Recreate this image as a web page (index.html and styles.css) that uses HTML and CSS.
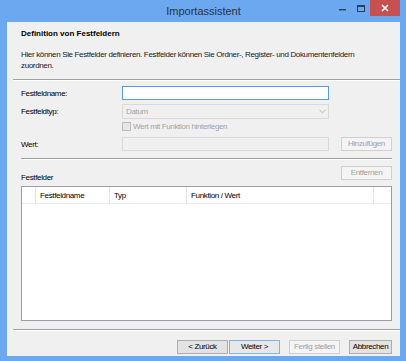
FILE: index.html
```html
<!DOCTYPE html>
<html lang="de">
<head>
    <meta charset="UTF-8">
    <title>Importassistent</title>
    <link rel="stylesheet" href="styles.css">
</head>
<body>
    <div class="window">
        <div class="titlebar">
            <span class="title">Importassistent</span>
            <div class="controls">
                <span class="ctl ctl-min"><svg width="18" height="16" viewBox="0 0 18 16"><rect x="4" y="9" width="7" height="1.4" fill="#2c3e56"/></svg></span>
                <span class="ctl ctl-max"><svg width="17" height="16" viewBox="0 0 17 16"><rect x="4.5" y="5.5" width="7" height="6" fill="none" stroke="#2c3e56" stroke-width="1"/><rect x="4" y="5" width="8" height="2" fill="#2c3e56"/></svg></span>
                <span class="ctl ctl-close"><svg width="30" height="16" viewBox="0 0 30 16"><path d="M12 5 L18 11 M18 5 L12 11" stroke="#fff" stroke-width="1.6"/></svg></span>
            </div>
        </div>

        <div class="client">
            <div class="header">
                <div class="heading">Definition von Festfeldern</div>
                <p class="intro">Hier können Sie Festfelder definieren. Festfelder können Sie Ordner-, Register- und Dokumentenfeldern zuordnen.</p>
            </div>
            <div class="rule rule-wide"></div>

            <div class="form">
                <div class="row">
                    <label class="label">Festfeldname:</label>
                    <div class="textbox focused"></div>
                </div>
                <div class="row row-select">
                    <label class="label">Festfeldtyp:</label>
                    <div class="combo disabled">
                        <span>Datum</span>
                        <svg width="7" height="5" viewBox="0 0 7 5"><path d="M0.5 0.8 L3.5 3.8 L6.5 0.8" fill="none" stroke="#b5b5b5" stroke-width="1"/></svg>
                    </div>
                </div>
                <div class="row row-check">
                    <span class="label"></span>
                    <span class="checkbox"></span>
                    <span class="check-text">Wert mit Funktion hinterlegen</span>
                </div>
                <div class="row row-value">
                    <label class="label">Wert:</label>
                    <div class="textbox disabled"></div>
                    <button class="btn btn-disabled btn-side">Hinzufügen</button>
                </div>

                <div class="rule rule-form"></div>

                <div class="list-bar">
                    <span class="list-title">Festfelder</span>
                    <button class="btn btn-disabled">Entfernen</button>
                </div>
                <div class="list">
                    <div class="list-head">
                        <span class="col"></span>
                        <span class="col">Festfeldname</span>
                        <span class="col">Typ</span>
                        <span class="col">Funktion / Wert</span>
                        <span class="col col-fill"></span>
                    </div>
                </div>
            </div>

            <div class="rule rule-wide rule-bottom"></div>

            <div class="footer">
                <button class="btn">&lt; Zurück</button>
                <button class="btn btn-default">Weiter &gt;</button>
                <button class="btn btn-disabled btn-gap">Fertig stellen</button>
                <button class="btn btn-gap btn-cancel">Abbrechen</button>
            </div>
        </div>
    </div>
</body>
</html>
```

FILE: styles.css
```css
* {
    box-sizing: border-box;
}
body {
    margin: 0;
    font-family: "Liberation Sans", Arial, sans-serif;
    font-size: 8px;
    letter-spacing: -0.35px;
    color: #000;
}
.window {
    width: 406px;
    height: 361px;
    background: #6ba8ef;
    padding: 0 6px 5px 7px;
    display: flex;
    flex-direction: column;
}
.titlebar {
    height: 22px;
    display: grid;
    grid-template-columns: 1fr auto 1fr;
    align-items: start;
}
.title {
    grid-column: 2;
    font-size: 11px;
    letter-spacing: 0;
    line-height: 22px;
    color: #2b3340;
}
.controls {
    grid-column: 3;
    justify-self: end;
    display: flex;
}
.ctl {
    display: block;
    height: 16px;
}
.ctl svg {
    display: block;
}
.ctl-close {
    background: #c75050;
}
.client {
    flex: 1;
    background: #f0f0f0;
    display: flex;
    flex-direction: column;
}
.header {
    padding: 7px 14px 8px;
}
.heading {
    font-weight: bold;
    letter-spacing: 0;
    line-height: 10px;
}
.intro {
    margin: 10px 0 0;
    line-height: 11px;
    color: #1a1a1a;
}
.rule {
    border-top: 1px solid #a0a0a0;
    border-bottom: 1px solid #fff;
}
.rule-wide {
    margin-left: 6px;
}
.form {
    padding: 5px 8px 0 14px;
}
.row {
    display: flex;
    align-items: center;
}
.row-select {
    margin-top: 4px;
}
.row-check {
    margin-top: 3px;
    height: 9px;
}
.row-value {
    margin-top: 6px;
}
.label {
    width: 101px;
    flex: none;
}
.textbox {
    width: 207px;
    height: 14px;
    background: #fff;
    border: 1px solid #abadb3;
}
.textbox.focused {
    border-color: #569de5;
}
.textbox.disabled {
    background: #f0f0f0;
    border-color: #d9d9d9;
}
.combo {
    width: 207px;
    height: 15px;
    border: 1px solid #d9d9d9;
    background: #f0f0f0;
    display: flex;
    align-items: center;
    justify-content: space-between;
    padding: 0 2px 0 3px;
    color: #a2a2a2;
}
.checkbox {
    width: 9px;
    height: 9px;
    border: 1px solid #bcbcbc;
    background: #e6e6e6;
    flex: none;
}
.check-text {
    margin-left: 2px;
    color: #a2a2a2;
    line-height: 9px;
}
.btn {
    width: 51px;
    height: 14px;
    padding: 0;
    font-family: inherit;
    font-size: 8px;
    letter-spacing: -0.35px;
    line-height: 12px;
    color: #000;
    background: #e3e3e3;
    border: 1px solid #adadad;
}
.btn-disabled {
    background: #f4f4f4;
    border-color: #cfcfcf;
    color: #a0a0a0;
}
.btn-default {
    border-color: #7eb4ea;
    background: #e8e8e8;
}
.btn-side {
    margin-left: 12px;
}
.btn-cancel {
    width: 43px;
}
.rule-form {
    margin-top: 7px;
}
.list-bar {
    display: flex;
    justify-content: space-between;
    align-items: flex-start;
    margin-top: 6px;
}
.list-title {
    margin-top: 7px;
    line-height: 10px;
}
.list {
    margin-top: 3px;
    height: 135px;
    background: #fff;
    border: 1px solid #9a9ea5;
}
.list-head {
    display: grid;
    grid-template-columns: 14px 74px 77px 187px 1fr;
    height: 17px;
    border-bottom: 1px solid #e8ecf2;
}
.col {
    border-right: 1px solid #e5e5e5;
    padding-left: 4px;
    line-height: 17px;
}
.col-fill {
    border-right: none;
}
.rule-bottom {
    margin-top: 8px;
}
.footer {
    display: flex;
    justify-content: flex-end;
    margin-top: 9px;
    padding: 0 8px 2px 0;
}
.footer .btn + .btn {
    margin-left: 1px;
}
.footer .btn.btn-gap {
    margin-left: 9px;
}
```
